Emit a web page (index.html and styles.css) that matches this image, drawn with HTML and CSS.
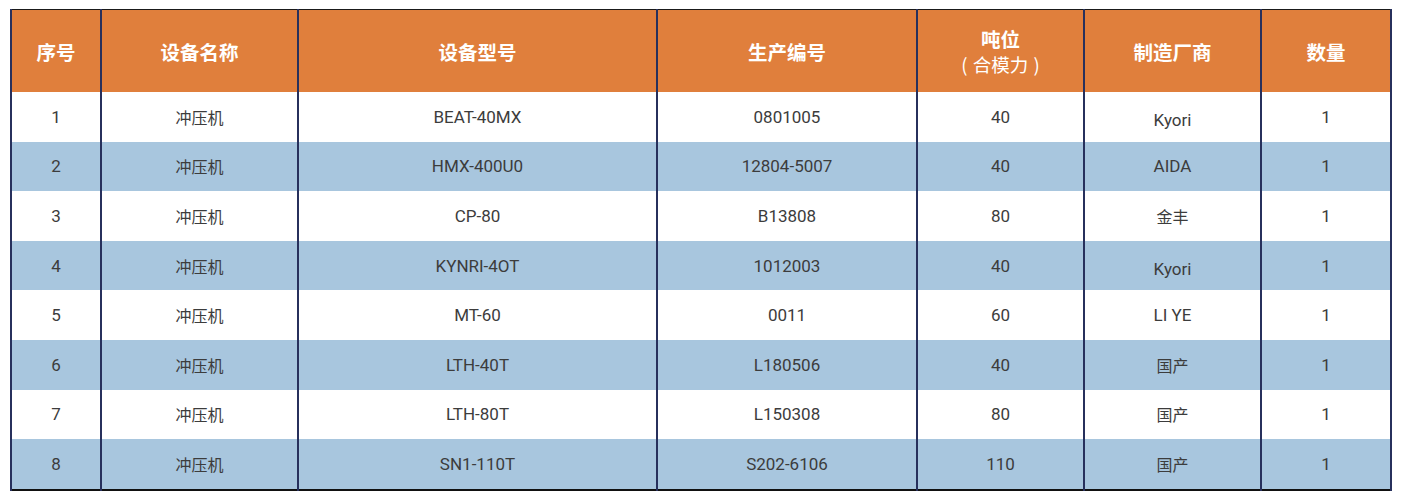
FILE: index.html
```html
<!DOCTYPE html>
<html lang="zh-CN">
<head>
<meta charset="utf-8">
<title>设备清单</title>
<link rel="stylesheet" href="styles.css">
</head>
<body>
<table class="equip">
  <colgroup>
    <col class="c1"><col class="c2"><col class="c3"><col class="c4"><col class="c5"><col class="c6"><col class="c7">
  </colgroup>
  <thead>
    <tr>
      <th>序号</th>
      <th>设备名称</th>
      <th>设备型号</th>
      <th>生产编号</th>
      <th><span class="h-main">吨位</span><span class="h-sub">( 合模力 )</span></th>
      <th>制造厂商</th>
      <th>数量</th>
    </tr>
  </thead>
  <tbody>
    <tr><td>1</td><td class="cn">冲压机</td><td>BEAT-40MX</td><td>0801005</td><td>40</td><td class="low">Kyori</td><td>1</td></tr>
    <tr class="alt"><td>2</td><td class="cn">冲压机</td><td>HMX-400U0</td><td>12804-5007</td><td>40</td><td>AIDA</td><td>1</td></tr>
    <tr><td>3</td><td class="cn">冲压机</td><td>CP-80</td><td>B13808</td><td>80</td><td class="cn">金丰</td><td>1</td></tr>
    <tr class="alt"><td>4</td><td class="cn">冲压机</td><td>KYNRI-4OT</td><td>1012003</td><td>40</td><td class="low">Kyori</td><td>1</td></tr>
    <tr><td>5</td><td class="cn">冲压机</td><td>MT-60</td><td>0011</td><td>60</td><td>LI YE</td><td>1</td></tr>
    <tr class="alt"><td>6</td><td class="cn">冲压机</td><td>LTH-40T</td><td>L180506</td><td>40</td><td class="cn">国产</td><td>1</td></tr>
    <tr><td>7</td><td class="cn">冲压机</td><td>LTH-80T</td><td>L150308</td><td>80</td><td class="cn">国产</td><td>1</td></tr>
    <tr class="alt"><td>8</td><td class="cn">冲压机</td><td>SN1-110T</td><td>S202-6106</td><td>110</td><td class="cn">国产</td><td>1</td></tr>
  </tbody>
</table>
</body>
</html>
```

FILE: styles.css
```css
html, body {
  margin: 0;
  padding: 0;
  background: #ffffff;
}

body {
  padding: 9px 11px 0 10px;
  font-family: Roboto, "Noto Sans CJK SC", sans-serif;
}

.equip {
  width: 1380px;
  border-collapse: collapse;
  table-layout: fixed;
  border-top: 1px solid #1a1a1a;
  border-left: 2px solid #111111;
  border-right: 2px solid #111111;
  border-bottom: 2px solid #111111;
}

.c1 { width: 90px; }
.c2 { width: 197px; }
.c3 { width: 359px; }
.c4 { width: 260px; }
.c5 { width: 167px; }
.c6 { width: 177px; }
.c7 { width: 130px; }

.equip th,
.equip td {
  padding: 0;
  text-align: center;
  vertical-align: middle;
  border-left: 2px solid #27305c;
  border-right: 2px solid #27305c;
}

.equip thead tr {
  height: 82px;
}

.equip th {
  height: 80px;
  padding-top: 2px;
  background: #e07f3c;
  color: #ffffff;
  font-family: "Noto Sans CJK SC", sans-serif;
  font-weight: 700;
  font-size: 19.5px;
  line-height: 24px;
}

.h-main,
.h-sub {
  display: block;
}

.h-sub {
  font-weight: 400;
  font-size: 18.5px;
  line-height: 26px;
  word-spacing: 1px;
}

.equip tbody tr {
  height: 49.6px;
}

.equip td {
  height: 49.6px;
  font-size: 17px;
  line-height: 20px;
  color: #3c3c3c;
  background: #ffffff;
}

.equip td.cn {
  font-family: "Noto Sans CJK SC", sans-serif;
  font-size: 16px;
}

.equip td.low {
  height: 43.6px;
  padding-top: 6px;
}

.equip tr.alt td {
  background: #a8c6de;
}
```
